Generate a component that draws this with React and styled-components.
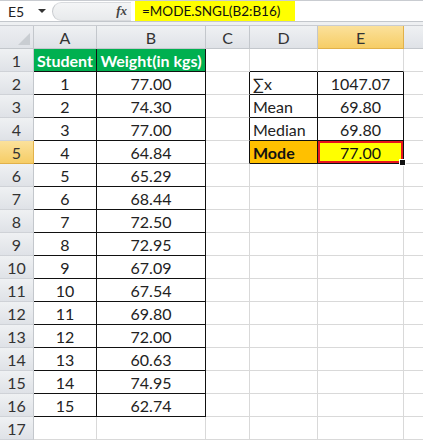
import React from 'react'
import styled, { createGlobalStyle } from 'styled-components'

const GlobalStyle = createGlobalStyle`
  html, body { margin: 0; padding: 0; background: #ffffff; }
  body { font-family: 'Lato', 'Liberation Sans', sans-serif; overflow: hidden; }
`

const COLS = [
  { key: 'A', width: 63 },
  { key: 'B', width: 109 },
  { key: 'C', width: 44 },
  { key: 'D', width: 68 },
  { key: 'E', width: 86 },
  { key: 'F', width: 40 },
]

const weights = ['77.00', '74.30', '77.00', '64.84', '65.29', '68.44', '72.50', '72.95', '67.09', '67.54', '69.80', '72.00', '60.63', '74.95', '62.74']

const stats = [
  ['∑x', '1047.07'],
  ['Mean', '69.80'],
  ['Median', '69.80'],
  ['Mode', '77.00'],
]

const GRID = '#d9d9d9'
const INK = '#111111'

let Sheet = styled.div`
  width: 423px;
  height: 440px;
  overflow: hidden;
  display: flex;
  flex-direction: column;
  color: #222;
`

let FormulaBar = styled.div`
  height: 24px;
  box-sizing: border-box;
  border-top: 1px solid #c9ccd1;
  border-bottom: 1px solid #c3c7cc;
  display: flex;
  align-items: center;
  background: #fff;
`

let NameBox = styled.div`
  width: 30px;
  padding-left: 8px;
  font-size: 14px;
  color: #222;
`

let DropArrow = styled.div`
  width: 0;
  height: 0;
  border-left: 4px solid transparent;
  border-right: 4px solid transparent;
  border-top: 4px solid #333;
`

let Pill = styled.div`
  margin-left: 6px;
  height: 19px;
  width: 79px;
  border-radius: 10px 0 0 10px;
  border-left: 1px solid #c7cace;
  border-top: 1px solid #d9dbde;
  border-bottom: 1px solid #d9dbde;
  background: linear-gradient(#f4f5f6, #e8eaec);
  display: flex;
  align-items: center;
  justify-content: flex-end;
  padding-right: 4px;
  box-sizing: border-box;
`

let Fx = styled.span`
  font-family: 'Liberation Serif', serif;
  font-style: italic;
  font-weight: bold;
  font-size: 13px;
  color: #444;
`

let FormulaText = styled.div`
  margin-left: 4px;
  height: 20px;
  width: 160px;
  background: #ffff00;
  font-size: 13.5px;
  line-height: 20px;
  padding-left: 7px;
  box-sizing: border-box;
  color: #111;
`

let Spacer = styled.div`
  height: 3px;
  background: #eef0f2;
  border-bottom: 1px solid #c9ccd1;
`

let Grid = styled.div`
  display: grid;
  grid-template-columns: 34px ${COLS.map(c => c.width + 'px').join(' ')};
  grid-auto-rows: 23px;
`

let Corner = styled.div`
  box-sizing: border-box;
  border-right: 1px solid #c3c7cc;
  border-bottom: 1px solid #c3c7cc;
  background: linear-gradient(#eceef1, #e0e3e8);
  position: relative;
  &::after {
    content: '';
    position: absolute;
    right: 3px;
    bottom: 3px;
    border-left: 12px solid transparent;
    border-bottom: 12px solid #c9cdd2;
  }
`

let Header = styled.div`
  box-sizing: border-box;
  display: flex;
  align-items: center;
  justify-content: center;
  font-size: 16px;
  color: #333;
  border-right: 1px solid ${p => (p.$active ? '#e1b14a' : '#c3c7cc')};
  border-bottom: 1px solid ${p => (p.$active ? '#e1b14a' : '#c3c7cc')};
  background: ${p => (p.$active ? 'linear-gradient(#fbe19b, #f6cd66)' : 'linear-gradient(#eff1f3, #dfe2e7)')};
`

let RowHead = styled(Header)`
  border-bottom-color: ${p => (p.$active ? '#e1b14a' : '#cfd2d7')};
`

let Cell = styled.div`
  box-sizing: border-box;
  position: relative;
  display: flex;
  align-items: center;
  justify-content: ${p => (p.$align === 'left' ? 'flex-start' : 'center')};
  padding-left: ${p => (p.$align === 'left' ? '3px' : '0')};
  font-size: 16px;
  font-weight: ${p => (p.$bold ? 700 : 400)};
  color: ${p => p.$color || '#222'};
  background: ${p => p.$bg || '#fff'};
  border-right: 1px solid ${p => p.$right || GRID};
  border-bottom: 1px solid ${p => p.$bottom || GRID};
  white-space: nowrap;
  box-shadow: ${p => (p.$selected ? 'inset 0 0 0 2px #e8141c' : 'none')};
`

let FillHandle = styled.div`
  position: absolute;
  right: -3px;
  bottom: -3px;
  width: 5px;
  height: 5px;
  background: #111;
  border: 1px solid #fff;
  z-index: 2;
`

function cellProps(r, c) {
  const p = {}
  const inT1 = r >= 1 && r <= 16 && (c === 'A' || c === 'B')
  const inT2 = r >= 2 && r <= 5 && (c === 'D' || c === 'E')
  if (inT1 || inT2) {
    p.$right = INK
    p.$bottom = INK
  }
  if (c === 'C' && r >= 2 && r <= 5) p.$right = INK
  if (r === 1 && (c === 'D' || c === 'E')) p.$bottom = INK
  if (r === 1 && inT1) {
    p.$bg = '#00b050'
    p.$color = '#fff'
    p.$bold = true
  }
  if (r === 1 && c === 'A') p.children = 'Student'
  if (r === 1 && c === 'B') p.children = 'Weight(in kgs)'
  if (r >= 2 && r <= 16 && c === 'A') p.children = String(r - 1)
  if (r >= 2 && r <= 16 && c === 'B') p.children = weights[r - 2]
  if (inT2) {
    const s = stats[r - 2]
    if (c === 'D') {
      p.children = s[0]
      p.$align = 'left'
    } else {
      p.children = s[1]
    }
    if (r === 5) {
      p.$bold = c === 'D'
      p.$bg = c === 'D' ? '#ffc000' : '#ffff00'
      p.$color = '#111'
      if (c === 'E') p.$selected = true
    }
  }
  return p
}

export default function App() {
  const rows = Array.from({ length: 17 }, (_, i) => i + 1)
  return (
    <Sheet>
      <GlobalStyle />
      <FormulaBar>
        <NameBox>E5</NameBox>
        <DropArrow />
        <Pill>
          <Fx>fx</Fx>
        </Pill>
        <FormulaText>=MODE.SNGL(B2:B16)</FormulaText>
      </FormulaBar>
      <Spacer />
      <Grid>
        <Corner />
        {COLS.map(c => (
          <Header key={c.key} $active={c.key === 'E'}>
            {c.key === 'F' ? '' : c.key}
          </Header>
        ))}
        {rows.map(r => (
          <React.Fragment key={r}>
            <RowHead $active={r === 5}>{r}</RowHead>
            {COLS.map(c => {
              const { children, ...rest } = cellProps(r, c.key)
              return (
                <Cell key={c.key} {...rest}>
                  {children}
                  {rest.$selected && <FillHandle />}
                </Cell>
              )
            })}
          </React.Fragment>
        ))}
      </Grid>
    </Sheet>
  )
}
